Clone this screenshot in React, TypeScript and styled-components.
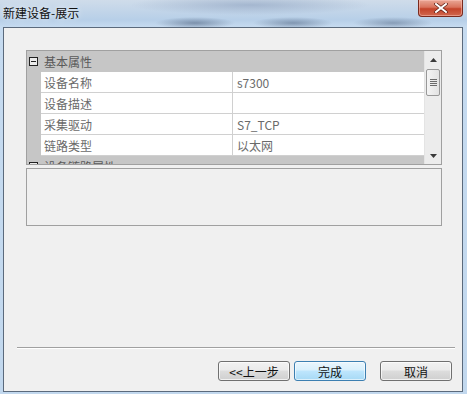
import styled, { createGlobalStyle } from "styled-components"

const GlobalStyle = createGlobalStyle`
  html, body {
    margin: 0;
    padding: 0;
    background: #c6d9ee;
  }
  body {
    font-family: "Noto Sans CJK SC", "Liberation Sans", sans-serif;
    font-size: 12px;
  }
`

const rows = [
  { name: "设备名称", value: "s7300" },
  { name: "设备描述", value: "" },
  { name: "采集驱动", value: "S7_TCP" },
  { name: "链路类型", value: "以太网" },
]

const App = () => {
  return (
    <Window>
      <GlobalStyle />
      <TitleBar>
        <Title>新建设备-展示</Title>
        <CloseButton>
          <svg width="14" height="10" viewBox="0 0 14 10">
            <path d="M2 1 L12 9 M12 1 L2 9" stroke="#5a1a10" strokeWidth="3.4" strokeLinecap="square" />
            <path d="M2 1 L12 9 M12 1 L2 9" stroke="#ffffff" strokeWidth="2" strokeLinecap="square" />
          </svg>
        </CloseButton>
      </TitleBar>

      <Client>
        <Grid>
          <GridBody>
            <Category>
              <Toggle />
              <CategoryLabel>基本属性</CategoryLabel>
            </Category>
            {rows.map((r) => (
              <Row key={r.name}>
                <Margin />
                <NameCell>{r.name}</NameCell>
                <ValueCell>{r.value}</ValueCell>
              </Row>
            ))}
            <Category>
              <Toggle />
              <CategoryLabel>设备链路属性</CategoryLabel>
            </Category>
          </GridBody>
          <ScrollBar>
            <Arrow>
              <svg width="7" height="4" viewBox="0 0 7 4"><path d="M0 4 L3.5 0 L7 4 Z" fill="#3a3a3a" /></svg>
            </Arrow>
            <Thumb>
              <Grip />
              <Grip />
              <Grip />
              <Grip />
            </Thumb>
            <Track />
            <Arrow>
              <svg width="7" height="4" viewBox="0 0 7 4"><path d="M0 0 L3.5 4 L7 0 Z" fill="#3a3a3a" /></svg>
            </Arrow>
          </ScrollBar>
        </Grid>

        <Description />

        <Spacer />
        <Separator />

        <ButtonRow>
          <Button>&lt;&lt;上一步</Button>
          <Button $primary>完成</Button>
          <Button $gap>取消</Button>
        </ButtonRow>
      </Client>
    </Window>
  )
}

export default App

const Window = styled.div`
  width: 467px;
  height: 394px;
  display: flex;
  flex-direction: column;
  background:
    radial-gradient(ellipse 40px 6px at 195px 23px, rgba(70, 90, 120, 0.55), transparent),
    radial-gradient(ellipse 40px 6px at 293px 23px, rgba(70, 90, 120, 0.5), transparent),
    radial-gradient(ellipse 40px 6px at 393px 23px, rgba(70, 90, 120, 0.45), transparent),
    radial-gradient(ellipse 120px 10px at 250px 5px, rgba(140, 160, 190, 0.6), transparent),
    linear-gradient(180deg, #cfdcea 0px, #b7cfe8 20px, #c6dbf0 27px, #c2d8ee 100%);
  overflow: hidden;
`

const TitleBar = styled.div`
  height: 27px;
  display: flex;
  align-items: flex-start;
  justify-content: space-between;
  padding: 0 4px 0 3px;
  box-sizing: border-box;
`

const Title = styled.div`
  margin-top: 5px;
  font-size: 12px;
  color: #111;
  line-height: 16px;
  text-shadow: 0 0 6px rgba(255, 255, 255, 0.9);
`

const CloseButton = styled.div`
  width: 45px;
  height: 17px;
  box-sizing: border-box;
  border: 1px solid #7a2a1e;
  border-top: none;
  border-radius: 0 0 4px 4px;
  background: linear-gradient(180deg, #e9a796 0%, #d9735d 45%, #c4432a 55%, #d0684f 100%);
  display: flex;
  align-items: center;
  justify-content: center;
  box-shadow: inset 0 0 0 1px rgba(255, 200, 190, 0.5);
`

const Client = styled.div`
  margin: 0 4px 2px 3px;
  flex: 1;
  background: #f0f0f0;
  border: 1px solid #5b6a7c;
  display: flex;
  flex-direction: column;
  padding: 22px 20px 10px 22px;
`

const Grid = styled.div`
  width: 416px;
  height: 115px;
  box-sizing: border-box;
  border: 1px solid #a0a0a0;
  display: flex;
  overflow: hidden;
  background: #c6c6c6;
`

const GridBody = styled.div`
  flex: 1;
  display: flex;
  flex-direction: column;
  overflow: hidden;
`

const Category = styled.div`
  height: 21px;
  flex-shrink: 0;
  display: flex;
  align-items: center;
  background: #c6c6c6;
`

const Toggle = styled.div`
  width: 9px;
  height: 9px;
  box-sizing: border-box;
  border: 1px solid #222;
  margin: 0 6px 0 2px;
  position: relative;
  background: #ebebeb;
  &::after {
    content: "";
    position: absolute;
    left: 1px;
    right: 1px;
    top: 3px;
    height: 1px;
    background: #222;
  }
`

const CategoryLabel = styled.span`
  color: #5a5a5a;
  font-size: 12px;
`

const Row = styled.div`
  height: 21px;
  flex-shrink: 0;
  display: flex;
`

const Margin = styled.div`
  width: 14px;
  background: #c6c6c6;
`

const Cell = styled.div`
  background: #fff;
  border-bottom: 1px solid #d0d0d0;
  box-sizing: border-box;
  display: flex;
  align-items: center;
  padding-left: 3px;
  color: #6a6a6a;
  font-size: 12px;
  white-space: nowrap;
`

const NameCell = styled(Cell)`
  width: 192px;
  border-right: 1px solid #d0d0d0;
`

const ValueCell = styled(Cell)`
  flex: 1;
  padding-left: 4px;
`

const ScrollBar = styled.div`
  width: 16px;
  background: #ececec;
  display: flex;
  flex-direction: column;
  border-left: 1px solid #e4e4e4;
`

const Arrow = styled.div`
  height: 17px;
  display: flex;
  align-items: center;
  justify-content: center;
`

const Thumb = styled.div`
  height: 27px;
  margin: 1px 1px 0 1px;
  box-sizing: border-box;
  border: 1px solid #989898;
  border-radius: 2px;
  background: linear-gradient(90deg, #f4f4f4, #e2e2e2);
  display: flex;
  flex-direction: column;
  align-items: center;
  justify-content: center;
  gap: 1px;
`

const Grip = styled.div`
  width: 7px;
  height: 1px;
  background: #6a6a6a;
`

const Track = styled.div`
  flex: 1;
`

const Description = styled.div`
  margin-top: 3px;
  width: 416px;
  height: 58px;
  box-sizing: border-box;
  border: 1px solid #a0a0a0;
  background: #f0f0f0;
`

const Spacer = styled.div`
  flex: 1;
`

const Separator = styled.div`
  margin-left: -9px;
  width: 438px;
  height: 1px;
  background: #a0a0a0;
  border-bottom: 1px solid #ffffff;
`

const ButtonRow = styled.div`
  display: flex;
  justify-content: flex-end;
  margin-top: 12px;
  margin-right: -10px;
  gap: 4px;
`

const Button = styled.div<{ $primary?: boolean; $gap?: boolean }>`
  width: 72px;
  height: 20px;
  box-sizing: border-box;
  border: 1px solid ${(p) => (p.$primary ? "#3c7fb1" : "#707070")};
  border-radius: 3px;
  margin-left: ${(p) => (p.$gap ? "10px" : "0")};
  background: ${(p) =>
    p.$primary
      ? "linear-gradient(180deg, #eaf6fd 0%, #d9f0fc 45%, #bee6fd 50%, #a7d9f5 100%)"
      : "linear-gradient(180deg, #f2f2f2 0%, #ebebeb 45%, #dddddd 50%, #cfcfcf 100%)"};
  box-shadow: inset 0 0 0 1px ${(p) => (p.$primary ? "rgba(255,255,255,0.6)" : "rgba(255,255,255,0.7)")};
  display: flex;
  align-items: center;
  justify-content: center;
  color: #111;
  font-size: 12px;
`
